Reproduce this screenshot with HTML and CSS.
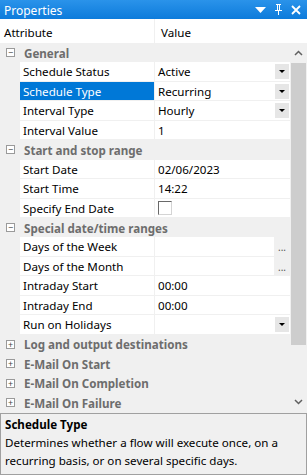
FILE: index.html
```html
<!DOCTYPE html>
<html lang="en">
<head>
  <meta charset="UTF-8" />
  <title>Properties</title>
  <link rel="stylesheet" href="styles.css">
</head>
<body>
  <div class="panel">
    <div class="titlebar">
      <span class="title">Properties</span>
      <div class="title-tools">
        <svg width="11" height="8" viewBox="0 0 11 8"><path d="M0 1h11L5.5 7z" fill="#fff"/></svg>
        <svg width="9" height="11" viewBox="0 0 9 11"><path d="M2 0h5v1H6v5h2v1H5v4H4V7H1V6h2V1H2z M4 1v5h1V1z" fill="#fff"/></svg>
        <svg width="10" height="10" viewBox="0 0 10 10"><path d="M1 1l8 8M9 1l-8 8" stroke="#fff" stroke-width="1.8"/></svg>
      </div>
    </div>

    <div class="header">
      <div class="h-attr">Attribute</div>
      <div class="h-val">Value</div>
    </div>

    <div class="body">
      <div class="grid">
        <div class="cat"><span class="box">&minus;</span>General</div>
        <div class="row"><div class="attr">Schedule Status</div><div class="val">Active<span class="drop"></span></div></div>
        <div class="row"><div class="attr selected">Schedule Type</div><div class="val">Recurring<span class="drop"></span></div></div>
        <div class="row"><div class="attr">Interval Type</div><div class="val">Hourly<span class="drop"></span></div></div>
        <div class="row"><div class="attr">Interval Value</div><div class="val">1</div></div>

        <div class="cat"><span class="box">&minus;</span>Start and stop range</div>
        <div class="row"><div class="attr">Start Date</div><div class="val">02/06/2023</div></div>
        <div class="row"><div class="attr">Start Time</div><div class="val">14:22</div></div>
        <div class="row"><div class="attr">Specify End Date</div><div class="val"><span class="check"></span></div></div>

        <div class="cat"><span class="box">&minus;</span>Special date/time ranges</div>
        <div class="row"><div class="attr">Days of the Week</div><div class="val short"></div><div class="dots">...</div></div>
        <div class="row"><div class="attr">Days of the Month</div><div class="val short"></div><div class="dots">...</div></div>
        <div class="row"><div class="attr">Intraday Start</div><div class="val">00:00</div></div>
        <div class="row"><div class="attr">Intraday End</div><div class="val">00:00</div></div>
        <div class="row"><div class="attr">Run on Holidays</div><div class="val"><span class="drop"></span></div></div>

        <div class="cat"><span class="box">+</span>Log and output destinations</div>
        <div class="cat"><span class="box">+</span>E-Mail On Start</div>
        <div class="cat"><span class="box">+</span>E-Mail On Completion</div>
        <div class="cat"><span class="box">+</span>E-Mail On Failure</div>
      </div>

      <div class="scrollbar">
        <svg class="arrow" width="9" height="6" viewBox="0 0 9 6"><path d="M1 5l3.5-3.5L8 5" stroke="#606060" stroke-width="1.5" fill="none"/></svg>
        <div class="track"><div class="thumb"></div></div>
        <svg class="arrow" width="9" height="6" viewBox="0 0 9 6"><path d="M1 1l3.5 3.5L8 1" stroke="#606060" stroke-width="1.5" fill="none"/></svg>
      </div>
    </div>

    <div class="help">
      <div class="help-title">Schedule Type</div>
      <div class="help-text">Determines whether a flow will execute once, on a recurring basis, or on several specific days.</div>
    </div>
  </div>
</body>
</html>
```

FILE: styles.css
```css
body {
  margin: 0;
  padding: 0;
  font-family: 'Noto Sans', 'Open Sans', sans-serif;
  font-size: 11.6px;
  color: #000;
  background: #f0f0f0;
}

.panel {
  width: 307px;
  height: 475px;
  display: flex;
  flex-direction: column;
  overflow: hidden;
}

.titlebar {
  height: 19px;
  flex: none;
  display: flex;
  align-items: center;
  justify-content: space-between;
  padding: 0 6px 0 4px;
  background: linear-gradient(#2a93ea, #0d7bdb);
  color: #fff;
}

.title {
  font-size: 12px;
  padding-top: 2px;
}

.title-tools {
  display: flex;
  align-items: center;
  gap: 8px;
}

.header {
  height: 24px;
  flex: none;
  display: flex;
  background: #fff;
}

.h-attr {
  width: 150px;
  padding: 3px 0 0 4px;
  line-height: 21px;
  border-right: 1px solid #f0f0f0;
}

.h-val {
  padding: 3px 0 0 6px;
  line-height: 21px;
}

.body {
  flex: none;
  display: flex;
  height: 369px;
}

.grid {
  flex: 1;
  display: flex;
  flex-direction: column;
}

.row, .cat {
  height: 19.45px;
  flex: none;
  box-sizing: border-box;
  display: flex;
}

.cat {
  align-items: center;
  padding-top: 1px;
  background: #f0f0f0;
  color: #6d6d6d;
  font-weight: bold;
}

.box {
  width: 7px;
  height: 7px;
  margin: -1px 9px 0 6px;
  border: 1px solid #9a9a9a;
  background: #fff;
  color: #444;
  font-size: 9px;
  font-weight: normal;
  line-height: 7px;
  text-align: center;
}

.row {
  padding-left: 20px;
  border-bottom: 1px solid #f0f0f0;
}

.attr {
  width: 131px;
  padding: 1px 0 0 3px;
  background: #fff;
  border-right: 1px solid #f0f0f0;
  line-height: 18.45px;
}

.attr.selected {
  background: #0078d7;
  color: #fff;
}

.val {
  flex: 1;
  position: relative;
  padding: 1px 0 0 3px;
  background: #fff;
  line-height: 18.45px;
}

.val.short {
  flex: none;
  width: 116px;
}

.dots {
  flex: 1;
  text-align: center;
  color: #555;
  font-size: 10px;
  line-height: 21px;
}

.drop {
  position: absolute;
  right: 1px;
  top: 2px;
  width: 14px;
  height: 15px;
  background: #e6e6e6;
}

.drop::after {
  content: '';
  position: absolute;
  left: 4px;
  top: 6px;
  border-left: 3px solid transparent;
  border-right: 3px solid transparent;
  border-top: 3px solid #000;
}

.check {
  display: inline-block;
  vertical-align: middle;
  width: 14px;
  height: 14px;
  margin-top: -3px;
  box-sizing: border-box;
  border-top: 1px solid #696969;
  border-left: 1px solid #696969;
  border-right: 1px solid #d4d4d4;
  border-bottom: 1px solid #d4d4d4;
  background: #fff;
}

.scrollbar {
  width: 17px;
  flex: none;
  display: flex;
  flex-direction: column;
  align-items: center;
  background: #f0f0f0;
}

.arrow {
  flex: none;
  margin: 7px 0;
}

.track {
  flex: 1;
  width: 100%;
  padding: 0 1px;
  box-sizing: border-box;
}

.thumb {
  height: 282px;
  background: #cdcdcd;
}

.help {
  flex: 1;
  margin-top: 1px;
  border: 1px solid #a0a0a0;
  padding: 2px 4px;
  background: #f0f0f0;
  line-height: 18px;
}

.help-title {
  font-weight: bold;
}
```
